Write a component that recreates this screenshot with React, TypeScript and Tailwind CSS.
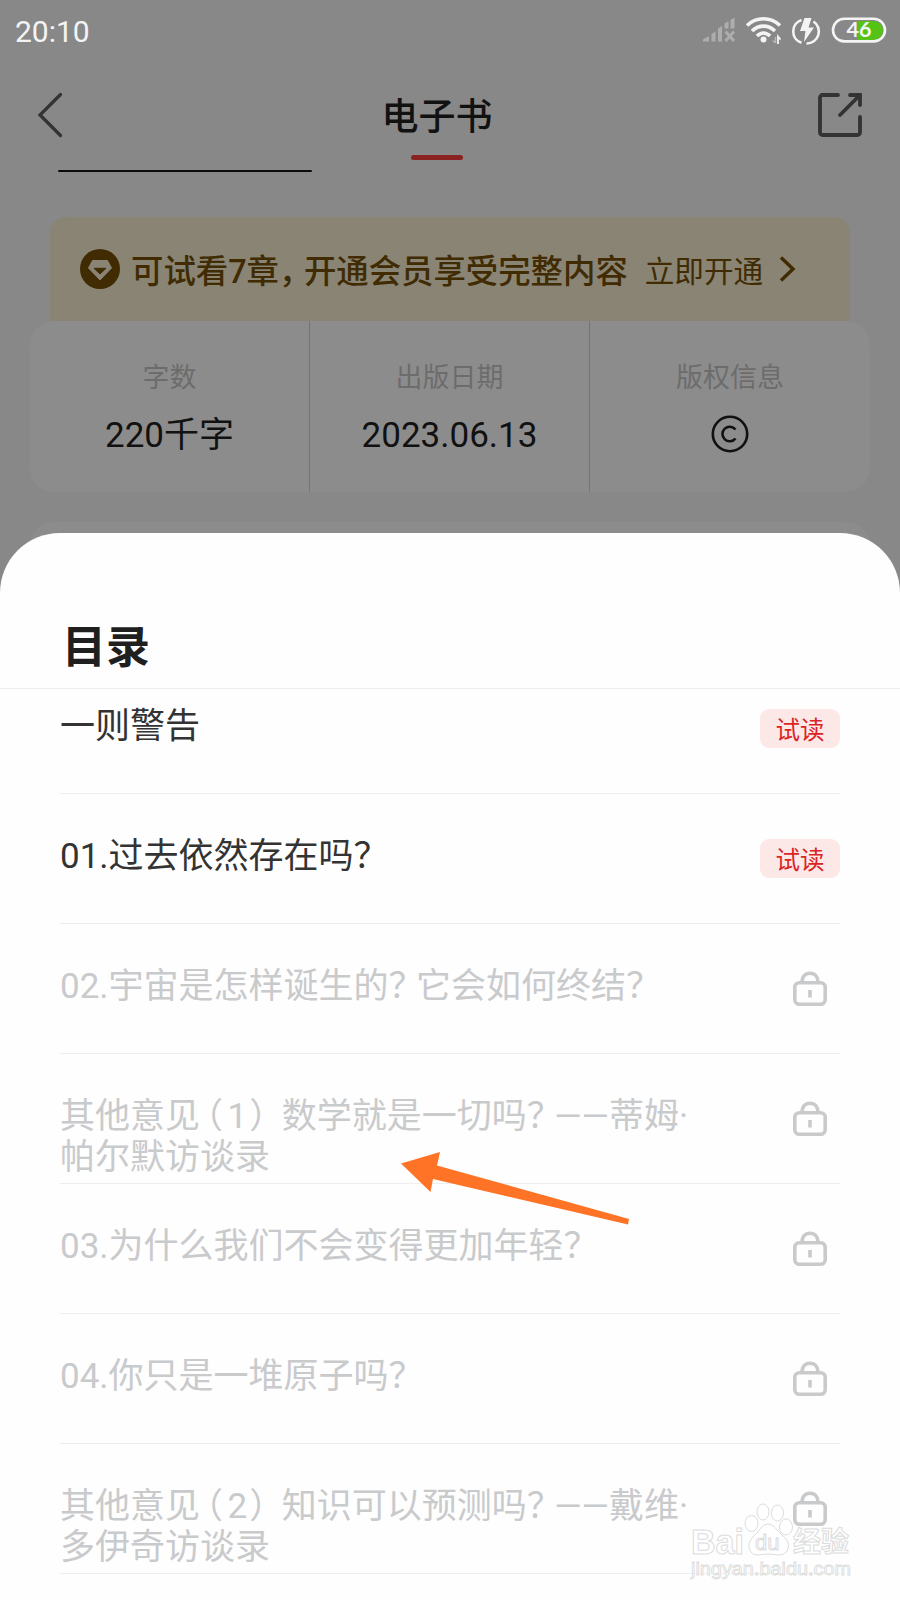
import React from "react";

type Chapter = {
  title: React.ReactNode;
  locked: boolean;
};

// full-width punctuation is set tighter than the characters around it
const Mark: React.FC<{ children: string }> = ({ children }) => (
  <span className="tracking-[-7.500px]">{children}</span>
);

const Numbered: React.FC<{ children: string }> = ({ children }) => (
  <>
    <span className="ml-[5.500px] mr-[4.500px] [font-feature-settings:'halt']">（</span>
    {children}
    <span className="ml-[2px] mr-[15px] [font-feature-settings:'halt']">）</span>
  </>
);

const chapters: Chapter[] = [
  { title: "一则警告", locked: false },
  { title: <>01.过去依然存在吗<Mark>？</Mark></>, locked: false },
  { title: <>02.宇宙是怎样诞生的<Mark>？</Mark>它会如何终结<Mark>？</Mark></>, locked: true },
  {
    title: (
      <>
        其他意见<Numbered>1</Numbered>数学就是一切吗<Mark>？</Mark>——蒂姆·<br />帕尔默访谈录
      </>
    ),
    locked: true,
  },
  { title: <>03.为什么我们不会变得更加年轻<Mark>？</Mark></>, locked: true },
  { title: <>04.你只是一堆原子吗<Mark>？</Mark></>, locked: true },
  {
    title: (
      <>
        其他意见<Numbered>2</Numbered>知识可以预测吗<Mark>？</Mark>——戴维·<br />多伊奇访谈录
      </>
    ),
    locked: true,
  },
];

const LockIcon: React.FC = () => (
  <svg width="34" height="35" viewBox="0 0 34 35" fill="none" stroke="#c9cacc" strokeWidth="3.6">
    <rect x="1.800" y="11.800" width="30.400" height="21.400" rx="4.500" />
    <path d="M9 11.500C9 5.500 12.200 2.300 17 2.300s8 3.200 8 9.200" />
    <path d="M17 19v7.500" />
  </svg>
);

const StatusBar: React.FC = () => (
  <div className="flex h-[62px] items-center justify-between pl-[15px] pr-[12px]">
    <span className="pt-[2px] text-[30px] leading-none text-[#f4f4f4]">20:10</span>
    <svg width="186" height="30" viewBox="0 0 186 30" fill="none">
      <g fill="#adadad">
        <path d="M1 25.500V23.500L7 20V25.500ZM9.500 25.500V18L13.500 15.500V25.500ZM16 25.500V12.500L20 10V25.500ZM22.500 12.500V7.500L26.500 5V12.500ZM28.500 12.500V4L32.500 1.500V12.500Z" />
        <path d="M23.500 15.500l8.500 9.500M32 15.500L23.500 25" stroke="#adadad" strokeWidth="3" />
      </g>
      <g stroke="#f4f4f4" strokeWidth="3.600">
        <path d="M45 9.500C54.500 0.500 68.500 0.500 78 9.500" />
        <path d="M50 15C57 8.500 66 8.500 73 15" />
        <path d="M55 20C59 16 64 16 68 20" />
      </g>
      <circle cx="61.500" cy="23.500" r="3" fill="#f4f4f4" />
      <path d="M73.500 21v6M71 24.500l2.500 2.500" stroke="#b8b8b8" strokeWidth="1.500" />
      <path d="M76 28v-7.500l2.500 3" stroke="#f4f4f4" strokeWidth="1.800" />
      <g stroke="#f4f4f4" strokeWidth="2.600">
        <path d="M99.500 4A12 12 0 0 0 99.500 26.800" />
        <path d="M111.500 5.500A12 12 0 0 1 104.500 27.500" />
      </g>
      <path d="M102.500 2h7l-3 9.500h5.500L102 26l1.500-11H98Z" fill="#f4f4f4" />
      <path d="M156 5h15.500a9.500 9.500 0 0 1 0 19H156Z" fill="#55c316" />
      <rect x="131" y="2.800" width="52" height="22.600" rx="11.300" stroke="#f4f4f4" strokeWidth="2.600" />
      <text x="144.500" y="21" fill="#f4f4f4" fontSize="21.500" fontWeight="700" className="font-[Lato,sans-serif]">46</text>
    </svg>
  </div>
);

const NavBar: React.FC = () => (
  <div className="flex h-[109px] items-start justify-between px-[37px] pt-[30px]">
    <svg width="28" height="46" viewBox="0 0 28 46" fill="none" stroke="#333" strokeWidth="3.200" strokeLinecap="round">
      <path d="M23.500 2.500L3 23L23.500 43.500" />
    </svg>
    <div className="mr-[8px] flex flex-col items-center pt-[3px]">
      <h1 className="text-[37px] font-medium leading-[46px] text-[#111]">电子书</h1>
      <div className="mt-[14px] h-[5px] w-[52px] rounded-full bg-[#8a2222]" />
    </div>
    <svg width="46" height="46" viewBox="0 0 46 46" fill="none" stroke="#333" strokeWidth="3.800" strokeLinecap="round">
      <path d="M21 3H5.500A2.500 2.500 0 0 0 3 5.500V40.500A2.500 2.500 0 0 0 5.500 43H40.500A2.500 2.500 0 0 0 43 40.500V25" />
      <path d="M33 3H43V13M42.500 3.500L23 23" />
    </svg>
  </div>
);

const BookInfo: React.FC = () => (
  <div className="mt-[45px] flex flex-col items-center">
    <div className="flex h-[104px] w-[800px] items-center rounded-t-[16px] bg-[#898474] pl-[30px] text-[#402b03]">
      <svg width="40" height="40" viewBox="0 0 40 40">
        <circle cx="20" cy="20" r="20" fill="#402b03" />
        <path d="M12.500 11.500h15L31.500 19L20 31L8.500 19Z" fill="#898474" stroke="#898474" strokeLinejoin="round" />
        <path d="M14 19.300h12L20 25Z" fill="#402b03" stroke="#402b03" strokeLinejoin="round" />
      </svg>
      <span className="ml-[11px] whitespace-nowrap pt-[6px] text-[32.400px] font-medium leading-none">
        可试看7章<Mark>，</Mark>开通会员享受完整内容
      </span>
      <span className="ml-[17px] whitespace-nowrap pt-[8px] text-[29.600px] leading-none">立即开通</span>
      <svg className="ml-[16px]" width="18" height="26" viewBox="0 0 18 26" fill="none" stroke="#402b03" strokeWidth="3.400">
        <path d="M2 1.500L14 13L2 24.500" />
      </svg>
    </div>
    <div className="grid h-[171px] w-[840px] grid-cols-3 divide-x divide-[#747474] rounded-[24px] bg-[#8c8c8c] text-[35px] text-[#111]">
      <div className="flex flex-col items-center pt-[37px]">
        <span className="text-[27px] leading-[40px] text-[#6c6c6c]">字数</span>
        <span className="mt-[17px] leading-[42px]">220千字</span>
      </div>
      <div className="flex flex-col items-center pt-[37px]">
        <span className="text-[27px] leading-[40px] text-[#6c6c6c]">出版日期</span>
        <span className="mt-[17px] leading-[42px]">2023.06.13</span>
      </div>
      <div className="flex flex-col items-center pt-[37px]">
        <span className="text-[27px] leading-[40px] text-[#6c6c6c]">版权信息</span>
        <svg className="mt-[17px]" width="38" height="38" viewBox="0 0 38 38" fill="none" stroke="#111" strokeWidth="2.600">
          <circle cx="19" cy="19" r="17.200" />
          <path d="M24.500 14.500A7.300 7.300 0 1 0 24.500 23.500" />
        </svg>
      </div>
    </div>
    <div className="mt-[30px] h-[80px] w-[840px] rounded-t-[24px] bg-[#8c8c8c]" />
  </div>
);

const ChapterRow: React.FC<{ chapter: Chapter }> = ({ chapter }) => (
  <li className="flex h-[130px] shrink-0 items-center justify-between border-b border-[#eee]">
    <p
      className={`self-start whitespace-nowrap pt-[42px] text-[35px] leading-[41px] ${
        chapter.locked ? "text-[#c9cacc]" : "text-[#333]"
      }`}
    >
      {chapter.title}
    </p>
    {chapter.locked ? (
      <div className="pr-[13px]">
        <LockIcon />
      </div>
    ) : (
      <span className="flex h-[39px] w-[80px] items-center justify-center rounded-[9px] bg-[#fde8e8] pt-[5px] text-[24.500px] leading-none text-[#d92525]">
        试读
      </span>
    )}
  </li>
);

const Watermark: React.FC = () => (
  <svg
    className="absolute left-[680px] top-[1495px]"
    width="190"
    height="90"
    viewBox="0 0 190 90"
    fill="#fff"
    stroke="#dcdcdc"
    strokeWidth="1"
  >
    <ellipse cx="71.500" cy="28.500" rx="6.500" ry="8" />
    <ellipse cx="83" cy="17" rx="6" ry="8" />
    <ellipse cx="97.500" cy="18" rx="6" ry="8" />
    <ellipse cx="106" cy="32" rx="6.500" ry="8" />
    <path d="M88 29C94 29 97 36 103 41C109 46 110 52 106 57C102 62 96 59 88 59C80 59 75 62 71 57C67 52 69 46 74 41C80 36 82 29 88 29Z" />
    <text x="11" y="58.500" fontSize="35" fontWeight="700" textLength="53" lengthAdjust="spacingAndGlyphs" className="font-[Liberation_Sans,sans-serif]">Bai</text>
    <text x="75" y="55" fontSize="22" className="font-[Liberation_Sans,sans-serif]">du</text>
    <text x="113" y="57" fontSize="28" fontWeight="700" className="font-[Noto_Sans_CJK_SC,sans-serif]">经验</text>
    <text x="11" y="80" fontSize="18" textLength="160" lengthAdjust="spacingAndGlyphs" strokeWidth="0.800" className="font-[Liberation_Sans,sans-serif]">jingyan.baidu.com</text>
  </svg>
);

const App: React.FC = () => {
  return (
    <div className="relative h-[1600px] w-[900px] overflow-hidden bg-[#888] font-[Roboto,'Noto_Sans_CJK_SC',sans-serif]">
      <StatusBar />
      <NavBar />
      <div className="-mt-px ml-[58px] h-[2px] w-[254px] rounded-full bg-[#0c0c0c]" />
      <BookInfo />

      {/* 目录 bottom sheet */}
      <section className="absolute inset-x-0 bottom-0 flex h-[1067px] flex-col rounded-t-[60px] bg-[#fefefe]">
        <header className="h-[156px] shrink-0 border-b border-[#eee] pl-[62px] pt-[85px]">
          <h2 className="text-[44px] font-bold leading-[60px] text-[#1f1f1f]">目录</h2>
        </header>
        <div className="flex-1 overflow-hidden px-[60px]">
          <ul className="-mt-[25px] flex flex-col">
            {chapters.map((chapter, index) => (
              <ChapterRow key={index} chapter={chapter} />
            ))}
          </ul>
        </div>
      </section>

      <svg className="absolute left-[400px] top-[1150px]" width="232" height="78" viewBox="0 0 232 78">
        <path d="M1 13.500L40 2L37 15.500L229 69L228 74.500L33 29L30.500 42Z" fill="#ff7326" />
      </svg>
      <Watermark />
    </div>
  );
};

export default App;
